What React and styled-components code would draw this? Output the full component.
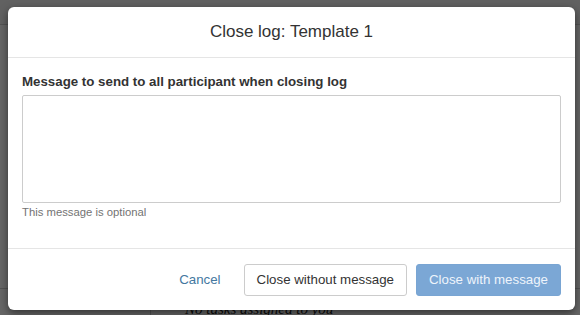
import React from "react";
import styled, { createGlobalStyle } from "styled-components";

const Global = createGlobalStyle`
  html, body { margin: 0; padding: 0; }
  body {
    font-family: "Liberation Sans", Arial, Helvetica, sans-serif;
    background: #fff;
    width: 580px;
    height: 315px;
    overflow: hidden;
  }
  * { box-sizing: border-box; }
`;

const Page = styled.div`
  position: relative;
  width: 580px;
  height: 315px;
  background: #fff;
  display: grid;
  grid-template-rows: 25px 1fr 26px;
  overflow: hidden;
`;

const TopBar = styled.div`
  background: #f2f2f2;
  border-bottom: 1px solid #d0d0d0;
`;

const Middle = styled.div`
  display: grid;
  grid-template-columns: 150px 1fr;
  border-bottom: 1px solid #cfcfcf;
`;

const SideCol = styled.div`
  border-right: 1px solid #cfcfcf;
`;

const Bottom = styled.div`
  display: grid;
  grid-template-columns: 150px 1fr;
`;

const EmptyNote = styled.div`
  padding: 12px 0 0 34px;
  font-style: italic;
  font-size: 15px;
  font-family: "Liberation Serif", serif;
  color: #222;
  border-left: 1px solid #cfcfcf;
  white-space: nowrap;
`;

const Backdrop = styled.div`
  position: absolute;
  inset: 0;
  background: rgba(0, 0, 0, 0.6);
  padding: 7px 5px 5px 8px;
  display: flex;
  align-items: flex-start;
`;

const Modal = styled.div`
  width: 567px;
  height: 303px;
  background: #fff;
  border-radius: 6px;
  box-shadow: 0 3px 9px rgba(0, 0, 0, 0.5);
  display: flex;
  flex-direction: column;
`;

const Header = styled.div`
  height: 51px;
  flex: none;
  border-bottom: 1px solid #e5e5e5;
  display: flex;
  align-items: center;
  justify-content: center;
  padding-bottom: 1px;
`;

const Title = styled.h4`
  margin: 0;
  font-size: 17px;
  font-weight: 400;
  color: #333;
`;

const Body = styled.div`
  flex: 1;
  padding: 16px 14px 0 14px;
  border-bottom: 1px solid #e5e5e5;
`;

const Label = styled.label`
  display: block;
  font-size: 13.3px;
  font-weight: 700;
  color: #333;
  margin-bottom: 6px;
`;

const TextArea = styled.textarea`
  display: block;
  width: 539px;
  height: 108px;
  border: 1px solid #ccc;
  border-radius: 2px;
  resize: none;
  padding: 6px 12px;
  font-family: inherit;
  font-size: 13.3px;
  outline: none;
`;

const Help = styled.p`
  margin: 3px 0 0 0;
  font-size: 11.3px;
  color: #737373;
`;

const Footer = styled.div`
  height: 61px;
  flex: none;
  display: flex;
  align-items: center;
  justify-content: flex-end;
  padding: 0 14px 0 0;
  gap: 9px;
`;

const Button = styled.button`
  height: 32px;
  padding: 0 12px;
  font-family: inherit;
  font-size: 13.3px;
  border-radius: 3px;
  border: 1px solid ${(p) => (p.$variant === "primary" ? "#79a5d3" : p.$variant === "link" ? "transparent" : "#ccc")};
  background: ${(p) => (p.$variant === "primary" ? "#7ba7d5" : "#fff")};
  color: ${(p) => (p.$variant === "primary" ? "#eef4fb" : p.$variant === "link" ? "#44789f" : "#333")};
  margin-right: ${(p) => (p.$variant === "link" ? "1px" : "0")};
  cursor: pointer;
`;

export default function App() {
  return (
    <>
      <Global />
      <Page>
        <TopBar />
        <Middle>
          <SideCol />
          <div />
        </Middle>
        <Bottom>
          <div />
          <EmptyNote>No tasks assigned to you</EmptyNote>
        </Bottom>
        <Backdrop>
          <Modal>
            <Header>
              <Title>Close log: Template 1</Title>
            </Header>
            <Body>
              <Label>Message to send to all participant when closing log</Label>
              <TextArea />
              <Help>This message is optional</Help>
            </Body>
            <Footer>
              <Button $variant="link">Cancel</Button>
              <Button>Close without message</Button>
              <Button $variant="primary">Close with message</Button>
            </Footer>
          </Modal>
        </Backdrop>
      </Page>
    </>
  );
}
